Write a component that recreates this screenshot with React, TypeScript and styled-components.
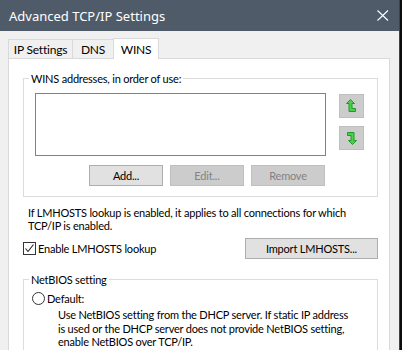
import styled, { createGlobalStyle } from "styled-components";

const GlobalStyle = createGlobalStyle`
	html, body {
		margin: 0;
		padding: 0;
		background: #0c0c0c;
	}
	body {
		font-family: Lato, "Noto Sans", sans-serif;
		font-size: 11px;
		letter-spacing: -0.2px;
		color: #000;
	}
`;

const Window = styled.div`
	width: 399px;
	height: 350px;
	border-right: 1px solid #3b4451;
	background: #f0f0f0;
	overflow: hidden;
	display: flex;
	flex-direction: column;
`;

const TitleBar = styled.div`
	height: 31px;
	flex: none;
	background: #4f5b69;
	color: #fff;
	display: flex;
	align-items: center;
	justify-content: space-between;
	padding: 0 10px 0 9px;
	font-family: "Noto Sans", sans-serif;
	font-size: 13px;
	letter-spacing: 0;
`;

const Body = styled.div`
	padding: 7px 9px 0 8px;
	display: flex;
	flex-direction: column;
`;

const TabStrip = styled.div`
	display: flex;
	align-items: flex-end;
	padding-left: 1px;
`;

const Tab = styled.div<{ $active?: boolean; $w: number }>`
	box-sizing: border-box;
	height: ${(p) => (p.$active ? "21px" : "19px")};
	margin-bottom: ${(p) => (p.$active ? "-1px" : "0")};
	margin-left: -1px;
	width: ${(p) => p.$w}px;
	background: ${(p) => (p.$active ? "#fff" : "#f0f0f0")};
	border: 1px solid #d9d9d9;
	border-bottom: none;
	position: relative;
	z-index: ${(p) => (p.$active ? 1 : 0)};
	display: flex;
	align-items: center;
	justify-content: center;
	font-size: 12px;
	line-height: 13px;
	padding-top: ${(p) => (p.$active ? "0" : "1px")};
`;

const Pane = styled.div`
	background: #fff;
	border: 1px solid #d9d9d9;
	border-bottom: none;
	height: 320px;
	padding: 12px 11px 0 14px;
	display: flex;
	flex-direction: column;
`;

// $inset is the left padding; the caption is pulled back so it always starts 7px in
const Group = styled.fieldset<{ $inset: number }>`
	margin: 0;
	border: 1px solid #dcdcdc;
	padding: 7px 13px 10px ${(p) => p.$inset}px;
	min-width: 0;

	& > legend {
		margin-left: ${(p) => 5 - p.$inset}px;
	}
`;

const Caption = styled.legend`
	padding: 0 2px;
	line-height: 15px;
`;

const ListRow = styled.div`
	display: flex;
	gap: 13px;
`;

const ListColumn = styled.div`
	width: 291px;
	display: flex;
	flex-direction: column;
	gap: 9px;
`;

const ListBox = styled.div`
	box-sizing: border-box;
	height: 63px;
	border: 1px solid #828282;
	background: #fff;
`;

const ButtonRow = styled.div`
	display: flex;
	justify-content: flex-end;
	gap: 7px;
	padding-right: 1px;
`;

const Button = styled.div<{ $disabled?: boolean; $w?: number }>`
	box-sizing: border-box;
	width: ${(p) => p.$w ?? 74}px;
	height: 21px;
	background: ${(p) => (p.$disabled ? "#cccccc" : "#e1e1e1")};
	border: 1px solid ${(p) => (p.$disabled ? "#bfbfbf" : "#adadad")};
	color: ${(p) => (p.$disabled ? "#838383" : "#000")};
	display: flex;
	align-items: center;
	justify-content: center;
	line-height: 13px;
`;

const ArrowColumn = styled.div`
	display: flex;
	flex-direction: column;
	gap: 8px;
	padding-top: 1px;
`;

const ArrowButton = styled.div`
	box-sizing: border-box;
	width: 25px;
	height: 24px;
	background: #cccccc;
	border: 1px solid #bfbfbf;
	display: flex;
	align-items: center;
	justify-content: center;
`;

const Note = styled.div`
	margin: 9px 0 0 5px;
	line-height: 13px;
	white-space: nowrap;
`;

const OptionRow = styled.div`
	margin-top: 6px;
	display: flex;
	align-items: center;
	justify-content: space-between;
`;

const CheckLabel = styled.div`
	display: flex;
	align-items: center;
	gap: 2px;
	line-height: 13px;
`;

const CheckBox = styled.div`
	box-sizing: border-box;
	width: 13px;
	height: 13px;
	border: 1px solid #333;
	background: #fff;
	display: flex;
	align-items: center;
	justify-content: center;
`;

const NetGroup = styled(Group)`
	margin-top: 13px;
	padding-top: 5px;
	padding-right: 8px;
`;

const RadioRow = styled.div`
	display: flex;
	align-items: center;
	gap: 2px;
	line-height: 13px;
`;

const Radio = styled.div`
	box-sizing: border-box;
	width: 13px;
	height: 13px;
	border: 1px solid #333;
	border-radius: 50%;
	background: #fff;
`;

const Description = styled.div`
	margin: 3px 0 0 26px;
	line-height: 13.5px;
	white-space: nowrap;
`;

function MoveIcon({ down }: { down?: boolean }) {
	return (
		<svg
			width="11"
			height="14"
			viewBox="0 0 11 14"
			style={down ? { transform: "rotate(180deg)" } : undefined}
		>
			<polygon
				points="4.5,0.5 8.5,4.5 6,4.5 6,9.5 9.5,9.5 9.5,12.5 3,12.5 3,4.5 0.5,4.5"
				fill="#4cd04c"
				stroke="#1f9a2a"
				strokeWidth="1"
			/>
		</svg>
	);
}

export default function App() {
	return (
		<>
			<GlobalStyle />
			<Window>
				<TitleBar>
					<span>Advanced TCP/IP Settings</span>
					<svg width="12" height="11" viewBox="0 0 12 11">
						<path d="M0.5 0.5 L11 10.5 M11 0.5 L0.5 10.5" stroke="#fff" strokeWidth="1.1" />
					</svg>
				</TitleBar>
				<Body>
					<TabStrip>
						<Tab $w={65}>IP Settings</Tab>
						<Tab $w={42}>DNS</Tab>
						<Tab $w={46} $active>
							WINS
						</Tab>
					</TabStrip>
					<Pane>
						<Group $inset={11}>
							<Caption>WINS addresses, in order of use:</Caption>
							<ListRow>
								<ListColumn>
									<ListBox />
									<ButtonRow>
										<Button>Add...</Button>
										<Button $disabled>Edit...</Button>
										<Button $disabled>Remove</Button>
									</ButtonRow>
								</ListColumn>
								<ArrowColumn>
									<ArrowButton>
										<MoveIcon />
									</ArrowButton>
									<ArrowButton>
										<MoveIcon down />
									</ArrowButton>
								</ArrowColumn>
							</ListRow>
						</Group>
						<Note>
							If LMHOSTS lookup is enabled, it applies to all connections for which
							<br />
							TCP/IP is enabled.
						</Note>
						<OptionRow>
							<CheckLabel>
								<CheckBox>
									<svg width="11" height="11" viewBox="0 0 11 11">
										<path d="M1.5 5.5 L4 8.5 L9.5 1.5" fill="none" stroke="#222" strokeWidth="1.1" />
									</svg>
								</CheckBox>
								Enable LMHOSTS lookup
							</CheckLabel>
							<Button $w={133}>Import LMHOSTS...</Button>
						</OptionRow>
						<NetGroup $inset={8}>
							<Caption>NetBIOS setting</Caption>
							<RadioRow>
								<Radio />
								Default:
							</RadioRow>
							<Description>
								Use NetBIOS setting from the DHCP server. If static IP address
								<br />
								is used or the DHCP server does not provide NetBIOS setting,
								<br />
								enable NetBIOS over TCP/IP.
							</Description>
						</NetGroup>
					</Pane>
				</Body>
			</Window>
		</>
	);
}
